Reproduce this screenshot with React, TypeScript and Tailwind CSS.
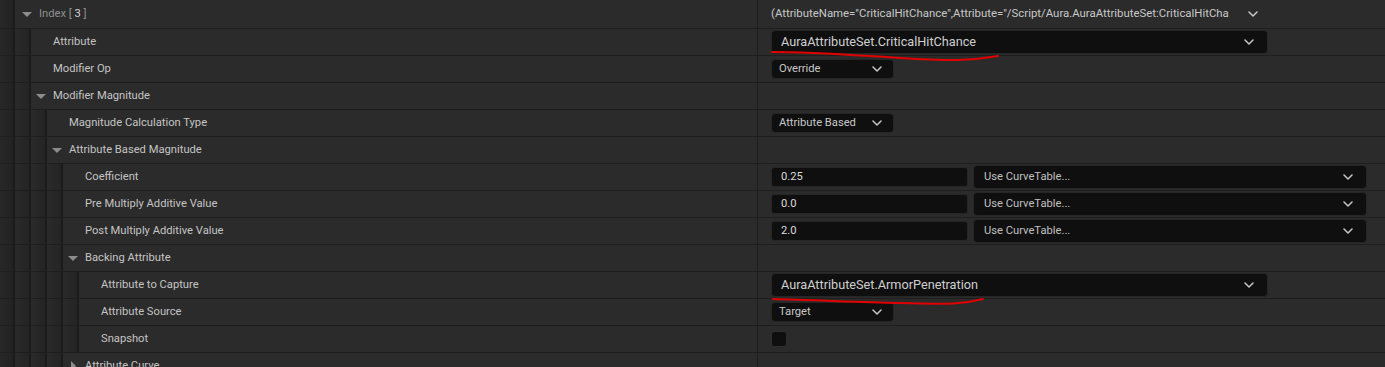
import React from 'react';

type Row = {
  label: React.ReactNode;
  level: number;
  arrow?: 'down' | 'right';
  first?: boolean;
  value?: React.ReactNode;
};

const Chevron = () => (
  <svg width="10" height="6" viewBox="0 0 10 6" className="shrink-0">
    <path d="M1 1l4 4 4-4" fill="none" stroke="#c8c8c8" strokeWidth="1.5" strokeLinecap="round" strokeLinejoin="round" />
  </svg>
);

const Arrow = ({ dir }: { dir: 'down' | 'right' }) =>
  dir === 'down' ? (
    <svg width="10" height="5" viewBox="0 0 10 5" className="shrink-0">
      <polygon points="0,0 10,0 5,5" fill="#8c8c8c" />
    </svg>
  ) : (
    <svg width="10" height="10" viewBox="0 0 10 10" className="shrink-0">
      <polygon points="3,0 8,5 3,10" fill="#8c8c8c" />
    </svg>
  );

const WideCombo = ({ text }: { text: string }) => (
  <div className="flex h-[24px] w-[497px] items-center justify-between rounded-[4px] border border-[#262626] bg-[#0f0f0f] pl-[9px] pr-[13px] text-[12.7px] text-[#cfcfcf]">
    <span>{text}</span>
    <Chevron />
  </div>
);

const SmallCombo = ({ text }: { text: string }) => (
  <div className="flex h-[20px] w-[123px] items-center justify-between rounded-[4px] border border-[#262626] bg-[#0f0f0f] pl-[7px] pr-[11px] text-[11.2px] text-[#c8c8c8]">
    <span>{text}</span>
    <Chevron />
  </div>
);

const NumberWithCurve = ({ value }: { value: string }) => (
  <div className="flex items-center">
    <div className="flex h-[20px] w-[197px] items-center rounded-[3px] border border-[#262626] bg-[#0f0f0f] pl-[9px] text-[11.2px] text-[#dcdcdc]">
      {value}
    </div>
    <div className="ml-[5px] flex h-[24px] w-[394px] items-center justify-between rounded-[4px] border border-[#262626] bg-[#0f0f0f] pl-[10px] pr-[13px] text-[11.2px] text-[#c0c0c0]">
      <span>Use CurveTable...</span>
      <Chevron />
    </div>
  </div>
);

const IndexValue = () => (
  <div className="flex w-[488px] items-center">
    <div className="w-[459px] overflow-hidden whitespace-nowrap text-[11.4px] text-[#c8c8c8]">
      (AttributeName="CriticalHitChance",Attribute="/Script/Aura.AuraAttributeSet:CriticalHitCha
    </div>
    <div className="ml-[18px]">
      <Chevron />
    </div>
  </div>
);

const rows: Row[] = [
  {
    label: (
      <span className="text-[#8f8f8f]">
        Index [ <span className="text-[#d6d6d6]">3</span> ]
      </span>
    ),
    level: 0,
    arrow: 'down',
    first: true,
    value: <IndexValue />,
  },
  { label: 'Attribute', level: 1, value: <WideCombo text="AuraAttributeSet.CriticalHitChance" /> },
  { label: 'Modifier Op', level: 1, value: <SmallCombo text="Override" /> },
  { label: 'Modifier Magnitude', level: 1, arrow: 'down' },
  { label: 'Magnitude Calculation Type', level: 2, value: <SmallCombo text="Attribute Based" /> },
  { label: 'Attribute Based Magnitude', level: 2, arrow: 'down' },
  { label: 'Coefficient', level: 3, value: <NumberWithCurve value="0.25" /> },
  { label: 'Pre Multiply Additive Value', level: 3, value: <NumberWithCurve value="0.0" /> },
  { label: 'Post Multiply Additive Value', level: 3, value: <NumberWithCurve value="2.0" /> },
  { label: 'Backing Attribute', level: 3, arrow: 'down' },
  { label: 'Attribute to Capture', level: 4, value: <WideCombo text="AuraAttributeSet.ArmorPenetration" /> },
  { label: 'Attribute Source', level: 4, value: <SmallCombo text="Target" /> },
  {
    label: 'Snapshot',
    level: 4,
    value: <div className="h-[16px] w-[16px] rounded-[3px] border border-[#2e2e2e] bg-[#0f0f0f]" />,
  },
  { label: 'Attribute Curve', level: 3, arrow: 'right' },
];

const Strip = ({ wide }: { wide: boolean }) => (
  <div
    className={
      wide
        ? 'w-[16px] shrink-0 border-r-2 border-[#1b1b1b] bg-linear-to-r from-[#2a2a2a] to-[#242424]'
        : 'w-[15px] shrink-0 border-r-2 border-[#1b1b1b] bg-linear-to-r from-[#272727] to-[#222222]'
    }
  />
);

const DetailRow = ({ row }: { row: Row }) => {
  const strips = Array.from({ length: row.level + 1 }, (_, i) => <Strip key={i} wide={i > 0} />);
  return (
    <div className={`flex border-b border-[#1e1e1e] ${row.first ? 'h-[29px]' : 'h-[27px]'}`}>
      <div className="flex w-[758px] shrink-0 border-r border-[#1e1e1e]">
        {strips}
        <div
          className={`flex flex-1 items-center bg-[#2b2b2b] text-[11.2px] text-[#c4c4c4] ${
            row.arrow ? (row.first ? 'pl-[7px]' : 'pl-[5px]') : 'pl-[22px]'
          }`}
        >
          {row.arrow && <Arrow dir={row.arrow} />}
          <span className={row.arrow ? 'ml-[7px]' : ''}>{row.label}</span>
        </div>
      </div>
      <div className="flex flex-1 items-center bg-[#2b2b2b] pl-[13px]">{row.value}</div>
    </div>
  );
};

export default function App() {
  return (
    <div className="relative h-[367px] w-[1385px] overflow-hidden bg-[#2b2b2b] font-['Roboto',sans-serif]">
      {rows.map((row, i) => (
        <DetailRow key={i} row={row} />
      ))}
      {/* hand-drawn red marks */}
      <svg className="pointer-events-none absolute inset-0" width="1385" height="367">
        <path
          d="M772 52 C 815 52, 850 55, 900 58 S 970 61, 998 56"
          fill="none"
          stroke="#e00000"
          strokeWidth="2"
          strokeLinecap="round"
        />
        <path
          d="M773 299 C 815 300, 855 302, 900 303 S 960 305, 983 299"
          fill="none"
          stroke="#e00000"
          strokeWidth="2"
          strokeLinecap="round"
        />
      </svg>
    </div>
  );
}
